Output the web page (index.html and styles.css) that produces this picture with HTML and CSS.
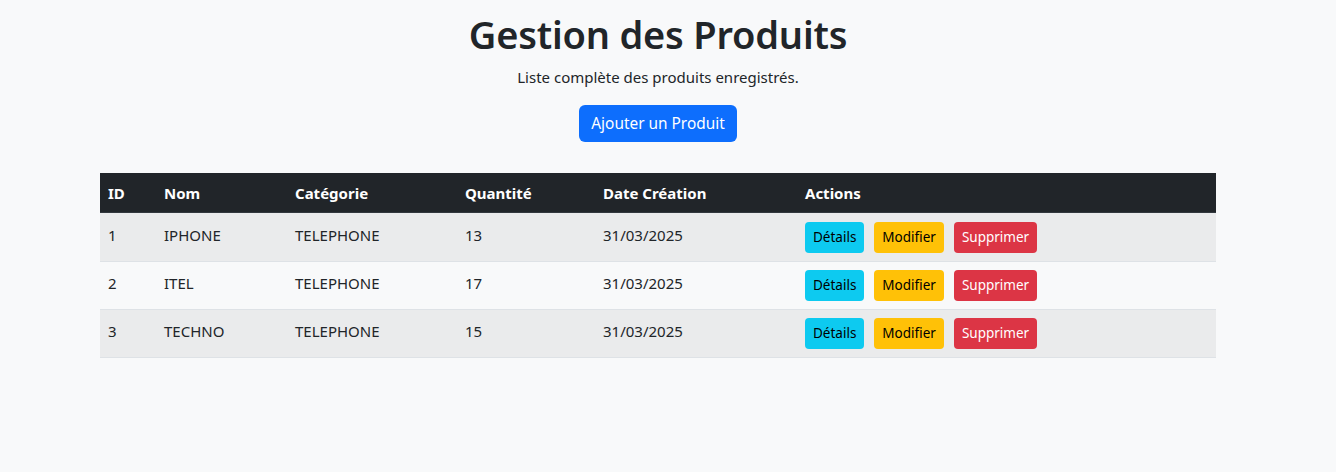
FILE: index.html
```html
<!DOCTYPE html>
<html lang="fr">
<head>
<meta charset="utf-8">
<title>Gestion des Produits</title>
<link rel="stylesheet" href="styles.css">
</head>
<body>
<div class="page">
  <div class="container">
    <h1 class="title">Gestion des Produits</h1>
    <p class="subtitle">Liste complète des produits enregistrés.</p>
    <div class="add-wrap"><a class="btn btn-primary" href="#">Ajouter un Produit</a></div>
    <table class="table">
      <thead>
        <tr>
          <th class="c-id">ID</th>
          <th class="c-nom">Nom</th>
          <th class="c-cat">Catégorie</th>
          <th class="c-qty">Quantité</th>
          <th class="c-date">Date Création</th>
          <th class="c-act">Actions</th>
        </tr>
      </thead>
      <tbody>
        <tr class="odd">
          <td>1</td><td>IPHONE</td><td>TELEPHONE</td><td>13</td><td>31/03/2025</td>
          <td class="actions"><a class="btn-sm info" href="#">Détails</a><a class="btn-sm warning" href="#">Modifier</a><a class="btn-sm danger" href="#">Supprimer</a></td>
        </tr>
        <tr>
          <td>2</td><td>ITEL</td><td>TELEPHONE</td><td>17</td><td>31/03/2025</td>
          <td class="actions"><a class="btn-sm info" href="#">Détails</a><a class="btn-sm warning" href="#">Modifier</a><a class="btn-sm danger" href="#">Supprimer</a></td>
        </tr>
        <tr class="odd">
          <td>3</td><td>TECHNO</td><td>TELEPHONE</td><td>15</td><td>31/03/2025</td>
          <td class="actions"><a class="btn-sm info" href="#">Détails</a><a class="btn-sm warning" href="#">Modifier</a><a class="btn-sm danger" href="#">Supprimer</a></td>
        </tr>
      </tbody>
    </table>
  </div>
</div>
</body>
</html>
```
FILE: styles.css
```css
* { box-sizing: border-box; }
html, body {
  margin: 0;
  padding: 0;
  background: #f8f9fa;
  color: #212529;
  font-family: "Noto Sans", "Open Sans", sans-serif;
  font-size: 16px;
  line-height: 1.5;
}
.page {
  width: 1316px;
}
.container {
  width: 1116px;
  margin: 0 auto;
  padding-top: 10px;
}
.title {
  margin: 0 0 8px;
  text-align: center;
  font-size: 38px;
  font-weight: 600;
  line-height: 48px;
  letter-spacing: -0.2px;
}
.subtitle {
  margin: 0 0 16px;
  text-align: center;
  font-size: 15px;
}
.add-wrap {
  display: flex;
  justify-content: center;
  margin-bottom: 31px;
}
.btn {
  display: inline-block;
  padding: 6px 12px;
  border-radius: 6px;
  font-size: 15.4px;
  line-height: 25.5px;
  text-decoration: none;
}
.btn-primary {
  background: #0d6efd;
  color: #fff;
}
.table {
  width: 1116px;
  border-collapse: collapse;
  table-layout: fixed;
  font-size: 15px;
}
.table th, .table td {
  text-align: left;
  padding: 8px;
  border-bottom: 1px solid #dee2e6;
  vertical-align: top;
}
.table thead th {
  background: #212529;
  color: #fff;
  font-weight: 700;
  border-bottom-color: #32383e;
  padding: 8px 8px 7px;
  line-height: 24px;
}
.table tbody td {
  line-height: 24px;
  height: 48px;
  padding-top: 9px;
}
.table tbody tr:first-child td {
  height: 49px;
  padding-top: 10px;
}
.table tbody tr.odd td {
  background: #eaebec;
}
.c-id { width: 56px; }
.c-nom { width: 131px; }
.c-cat { width: 170px; }
.c-qty { width: 138px; }
.c-date { width: 202px; }
.c-act { width: 419px; }
.table td.actions {
  padding-top: 8px;
  padding-bottom: 8px;
}
.table tbody tr:first-child td.actions {
  padding-top: 9px;
}
.actions {
  white-space: nowrap;
}
.btn-sm {
  display: inline-block;
  padding: 4px 8px;
  margin-right: 10px;
  border-radius: 4px;
  font-size: 13.5px;
  line-height: 23px;
  text-decoration: none;
}
.info { background: #0dcaf0; color: #000; }
.warning { background: #ffc107; color: #000; }
.danger { background: #dc3545; color: #fff; }
```
